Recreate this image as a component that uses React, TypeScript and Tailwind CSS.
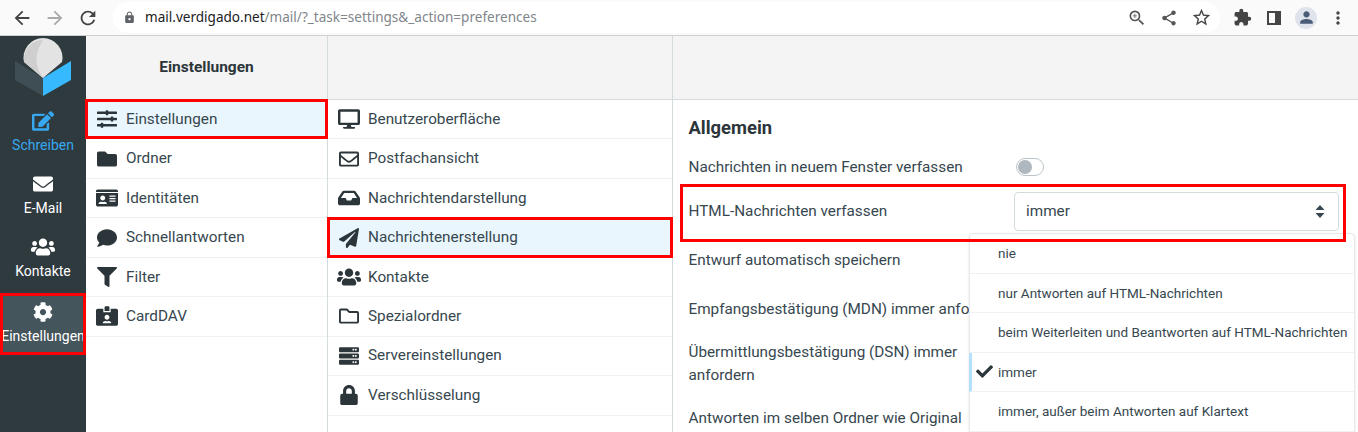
import React from 'react';
import {
  FaEdit, FaEnvelope, FaUsers, FaCog, FaSlidersH, FaFolder, FaIdCard, FaComment, FaFilter, FaIdCardAlt,
  FaDesktop, FaRegEnvelope, FaInbox, FaPaperPlane, FaRegFolder, FaServer, FaLock, FaCheck,
} from 'react-icons/fa';
import { MdArrowBack, MdArrowForward, MdRefresh, MdLock, MdZoomIn, MdShare, MdStarBorder, MdMoreVert, MdPerson, MdExtension } from 'react-icons/md';

const settingsItems = [
  { label: 'Einstellungen', icon: FaSlidersH, size: 20, active: true },
  { label: 'Ordner', icon: FaFolder, size: 20 },
  { label: 'Identitäten', icon: FaIdCard, size: 22 },
  { label: 'Schnellantworten', icon: FaComment, size: 20 },
  { label: 'Filter', icon: FaFilter, size: 20 },
  { label: 'CardDAV', icon: FaIdCardAlt, size: 22 },
];

const prefItems = [
  { label: 'Benutzeroberfläche', icon: FaDesktop, size: 22 },
  { label: 'Postfachansicht', icon: FaRegEnvelope, size: 20 },
  { label: 'Nachrichtendarstellung', icon: FaInbox, size: 22 },
  { label: 'Nachrichtenerstellung', icon: FaPaperPlane, size: 20, active: true },
  { label: 'Kontakte', icon: FaUsers, size: 24 },
  { label: 'Spezialordner', icon: FaRegFolder, size: 20 },
  { label: 'Servereinstellungen', icon: FaServer, size: 20 },
  { label: 'Verschlüsselung', icon: FaLock, size: 20 },
];

const options = [
  'nie',
  'nur Antworten auf HTML-Nachrichten',
  'beim Weiterleiten und Beantworten auf HTML-Nachrichten',
  'immer',
  'immer, außer beim Antworten auf Klartext',
];

const Logo = () => (
  <svg width="86" height="64" viewBox="0 36 86 64">
    <path d="M15 61 L43 78 L43 96 L15 80 Z" fill="#3f4e54" />
    <path d="M71 61 L43 78 L43 96 L71 80 Z" fill="#37b9ff" />
    <path d="M24 62 A19.5 19.5 0 1 1 62 62 L43 78 Z" fill="#e3e3e3" />
    <path d="M43 40 A19.5 19.5 0 0 0 24 62 L43 78 Q30 60 43 40 Z" fill="#cfcfcf" />
  </svg>
);

type NavProps = { icon: React.ElementType; size: number; label: string; className: string };

const NavItem = ({ icon: Icon, size, label, className }: NavProps) => (
  <div className={`flex flex-col items-center ${className}`}>
    <span className="flex items-center justify-center h-[22px]">
      <Icon size={size} />
    </span>
    <span className="mt-[5px] text-[14px] leading-[17px] whitespace-nowrap">{label}</span>
  </div>
);

type RowProps = { icon: React.ElementType; size: number; label: string; active?: boolean };

const MenuRow = ({ icon: Icon, size, label, active }: RowProps) => (
  <div className={`relative flex items-center h-[39.45px] border-b border-[#eff2f3] pl-[10px] ${active ? 'bg-[#e9f6fd]' : ''}`}>
    <span className="w-[22px] flex justify-center mr-[8px] text-[#2c363a]">
      <Icon size={size} className="shrink-0" />
    </span>
    <span className="text-[15.3px] text-[#37474f] whitespace-nowrap">{label}</span>
    {active && <div className="absolute -left-px -right-px -top-px -bottom-px border-[3px] border-[#f00] z-10" />}
  </div>
);

export default function App() {
  return (
    <div className="relative w-[1358px] h-[432px] overflow-hidden bg-white font-['Roboto',sans-serif]">
      {/* browser bar */}
      <div className="flex items-center h-[36px] bg-[#fafafa] border-b border-[#cfcfcf]">
        <MdArrowBack className="ml-[11px] text-[22px] text-[#444]" />
        <MdArrowForward className="ml-[11px] text-[22px] text-[#aaa]" />
        <MdRefresh className="ml-[11px] text-[22px] text-[#444]" />
        <div className="flex items-center ml-[14px] w-[1107px] h-[31px] rounded-full bg-white pl-[10px]">
          <MdLock className="text-[13px] text-[#5f6368]" />
          <span className="ml-[9px] text-[13.55px] font-['Noto_Sans',sans-serif] text-[#80868b] whitespace-nowrap">
            <span className="text-[#202124]">mail.verdigado.net</span>/mail/?_task=settings&amp;_action=preferences
          </span>
          <MdZoomIn className="ml-auto text-[20px] text-[#555]" />
          <MdShare className="ml-[13px] text-[18px] text-[#555]" />
          <MdStarBorder className="ml-[13px] mr-[8px] text-[21px] text-[#444]" />
        </div>
        <MdExtension className="ml-[13px] text-[19px] text-[#444]" />
        <div className="ml-[15px] w-[14px] h-[14px] border-2 border-[#444] border-r-[6px]" />
        <div className="ml-[14px] w-[22px] h-[22px] rounded-full bg-[#dfe3eb] flex items-center justify-center">
          <MdPerson className="text-[19px] text-[#4a5b78]" />
        </div>
        <MdMoreVert className="ml-[11px] text-[20px] text-[#444]" />
      </div>

      <div className="flex h-[396px]">
        {/* main nav */}
        <div className="w-[86px] shrink-0 bg-[#2f3a3f] text-white">
          <Logo />
          <NavItem icon={FaEdit} size={22} label="Schreiben" className="h-[63px] pt-[10px] text-[#37a8f0]" />
          <NavItem icon={FaEnvelope} size={20} label="E-Mail" className="h-[63px] pt-[10px] text-white" />
          <NavItem icon={FaUsers} size={24} label="Kontakte" className="h-[67px] pt-[10px] text-white" />
          <div className="relative h-[62px] bg-[#45555c] pt-[8px]">
            <NavItem icon={FaCog} size={20} label="Einstellungen" className="text-white" />
            <div className="absolute inset-0 border-[3px] border-[#f00]" />
          </div>
        </div>

        {/* settings list */}
        <div className="w-[242px] shrink-0 border-r border-[#d4dbde]">
          <div className="flex items-center justify-center h-[64px] bg-[#f4f4f4] border-b border-[#d4dbde] text-[15.5px] font-bold text-[#2c363a]">
            Einstellungen
          </div>
          {settingsItems.map((item) => (
            <MenuRow key={item.label} {...item} />
          ))}
        </div>

        {/* preferences list */}
        <div className="w-[345px] shrink-0 border-r border-[#d4dbde]">
          <div className="h-[64px] bg-[#f4f4f4] border-b border-[#d4dbde]" />
          {prefItems.map((item) => (
            <MenuRow key={item.label} {...item} />
          ))}
        </div>

        {/* form */}
        <div className="flex-1 min-w-0">
          <div className="h-[64px] bg-[#f4f4f4] border-b border-[#d4dbde]" />
          <div className="pl-[15.5px] pr-[19px] text-[15.3px] text-[#37474f]">
            <h2 className="pt-[16px] h-[50px] text-[18.4px] leading-[24px] font-bold text-[#2c363a]">Allgemein</h2>
            <div className="flex items-center h-[34px]">
              <span className="w-[327.5px]">Nachrichten in neuem Fenster verfassen</span>
              <div className="w-[28px] h-[18px] rounded-full border border-[#bcc5ca] p-px">
                <div className="w-[14px] h-[14px] rounded-full bg-[#b0b8bf]" />
              </div>
            </div>
            <div className="relative flex items-center h-[55px]">
              <span className="w-[325.5px] -mt-[1px]">HTML-Nachrichten verfassen</span>
              <div className="flex items-center justify-between flex-1 h-[39px] pl-[11px] pr-[13px] bg-white border border-[#d4dbde] rounded">
                immer
                <svg width="10" height="13" viewBox="0 0 10 13" fill="#37474f">
                  <path d="M5 0 L9.5 5 H0.5 Z M5 13 L9.5 8 H0.5 Z" />
                </svg>
              </div>
              <div className="absolute left-[-8.5px] right-[-7px] top-0 bottom-[-3px] border-[3px] border-[#f00] z-20" />
            </div>
            <div className="flex items-center h-[43px]">Entwurf automatisch speichern</div>
            <div className="flex items-center h-[54px] whitespace-nowrap">Empfangsbestätigung (MDN) immer anfordern</div>
            <div className="flex items-center h-[55px] leading-[23px] w-[290px]">Übermittlungsbestätigung (DSN) immer anfordern</div>
            <div className="flex items-center h-[33px] mt-[11px]">Antworten im selben Ordner wie Original</div>
          </div>
        </div>
      </div>

      {/* open select popup */}
      <div className="absolute left-[969px] top-[233px] w-[386px] h-[220px] bg-white rounded-t border border-[#e6eaec] shadow-sm text-[13.5px] text-[#37474f] z-10">
        {options.map((option) =>
          option === 'immer' ? (
            <div key={option} className="relative flex items-center h-[39.5px] -ml-px pl-[26px] border-l-[3px] border-l-[#b3e0fb] border-b border-b-[#eff2f3] whitespace-nowrap">
              <FaCheck className="absolute left-[4px] text-[17px] text-[#2c363a]" />
              {option}
            </div>
          ) : (
            <div key={option} className="flex items-center h-[39.5px] pl-[28px] border-b border-[#eff2f3] whitespace-nowrap">
              {option}
            </div>
          ),
        )}
      </div>
    </div>
  );
}
